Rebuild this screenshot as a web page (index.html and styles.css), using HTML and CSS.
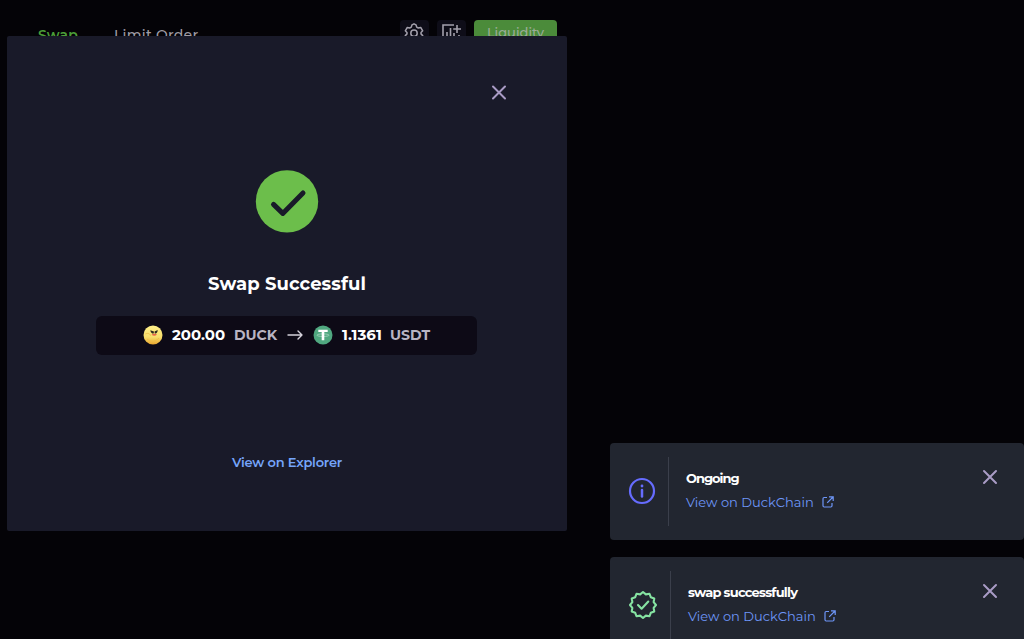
FILE: index.html
```html
<!DOCTYPE html>
<html lang="en">
<head>
<meta charset="utf-8">
<title>Swap</title>
<link rel="stylesheet" href="styles.css">
</head>
<body>
<header class="toolbar">
  <nav class="tabs"><span class="tab tab-active">Swap</span><span class="tab tab-limit">Limit Order</span></nav>
  <div class="actions">
    <span class="tool"><svg width="20" height="20" viewBox="0 0 20 20" fill="none" stroke="currentColor" stroke-width="1.5" stroke-linejoin="round"><path d="M8 1.800l2-1 2 1 .7 2.300 1.600.9 2.400-.6 2 3.400L17 9.500v1.400l1.700 1.700-2 3.400-2.400-.6-1.600.9-.7 2.300H8l-.7-2.300-1.600-.9-2.400.6-2-3.400L3 10.900V9.500L1.300 7.800l2-3.400 2.400.6 1.600-.9z"/><circle cx="10" cy="10.200" r="3.200"/></svg></span>
    <span class="tool"><svg width="20" height="20" viewBox="0 0 20 20" fill="none" stroke="currentColor" stroke-width="1.6"><path d="M13 2H2v16h16v-6M6 16V9M9.500 16V5M13 16v-6M16 2v8M12.200 6H20"/></svg></span>
    <span class="liquidity">Liquidity</span>
  </div>
</header>

<main class="modal">
  <svg class="modal-close" width="16" height="16" viewBox="0 0 16 16"><path d="M2 1.500l12 12M14 1.500l-12 12"/></svg>
  <svg class="success" width="64" height="64" viewBox="0 0 64 64"><circle cx="32" cy="32.400" r="31.200" fill="#6cbe4b"/><path d="M18.500 35.400l9.300 9L48 24" fill="none" stroke="#191a29" stroke-width="5" stroke-linecap="round" stroke-linejoin="round"/></svg>
  <h1 class="title">Swap Successful</h1>
  <div class="summary">
    <svg class="coin" width="20" height="20" viewBox="0 0 20 20">
      <defs><linearGradient id="gold" x1="0" y1="0" x2="0" y2="1"><stop offset="0" stop-color="#fff08a"/><stop offset=".6" stop-color="#f8df6c"/><stop offset="1" stop-color="#e9a52e"/></linearGradient></defs>
      <circle cx="10" cy="10" r="9.500" fill="url(#gold)"/><path d="M2.300 9c3-1.500 5 0 5.500 2M4 14c4 3.500 9 2.500 12-1" fill="none" stroke="#eebc48" stroke-width=".8"/>
      <path d="M7.300 5.300l3.700 1.300-.3 2c-1.700.2-3-.8-3.400-3.300zM14.700 5l-3.200 1.600.3 2c1.700 0 2.800-1 2.900-3.600z" fill="#302b20"/><path d="M8.500 9.700q2.500-1.800 5.500-.2-2.500 2.300-5.500.2z" fill="#e8654b"/>
    </svg>
    <strong class="amount amount-in">200.00</strong><span class="symbol symbol-in">DUCK</span>
    <svg class="arrow" width="16" height="12" viewBox="0 0 16 12" fill="none" stroke="#d5d2dc" stroke-width="1.400" stroke-linecap="round" stroke-linejoin="round"><path d="M1 6h14M11 2l4 4-4 4"/></svg>
    <svg class="coin tether" width="20" height="20" viewBox="0 0 20 20"><circle cx="10" cy="10" r="9.500" fill="#50a880"/><ellipse cx="10" cy="10.200" rx="6" ry="1.300" fill="none" stroke="#b5dcca" stroke-width=".7"/><path d="M5.300 4.700h9.400V7h-3.400v8.300H8.700V7H5.300z" fill="#fff"/></svg>
    <strong class="amount amount-out">1.1361</strong><span class="symbol symbol-out">USDT</span>
  </div>
  <a class="explorer">View on Explorer</a>
</main>

<aside class="toasts">
  <section class="toast">
    <div class="toast-icon"><svg width="28" height="28" viewBox="0 0 28 28" fill="none" stroke="#666cff" stroke-width="2.200"><circle cx="14" cy="14" r="12"/><path d="M14 13v6.500" stroke-width="2.500" stroke-linecap="round"/><circle cx="14" cy="9" r="1.400" fill="#666cff" stroke="none"/></svg></div>
    <div class="toast-copy"><strong class="toast-title ongoing">Ongoing</strong><a class="chain"><span>View on DuckChain</span><svg width="12" height="12" viewBox="0 0 12 12"><path d="M5 1.500H2.200Q1 1.500 1 2.700v7.100Q1 11 2.200 11h6.600Q10 11 10 9.800V7M7 .8h4.200V5M11 1L5.200 6.800"/></svg></a></div>
    <svg class="toast-close" width="16" height="16" viewBox="0 0 16 16"><path d="M2 2l12 12M14 2L2 14"/></svg>
  </section>
  <section class="toast toast-done">
    <div class="toast-icon"><svg width="30" height="30" viewBox="-15 -15 30 30" fill="none" stroke="#86e3a2" stroke-width="2.100" stroke-linecap="round" stroke-linejoin="round"><path d="M0-13 2.850-10.630 6.500-11.260 7.780-7.780 11.260-6.500 10.630-2.850 13 0 10.630 2.850 11.260 6.500 7.780 7.780 6.500 11.260 2.850 10.630 0 13-2.850 10.630-6.500 11.260-7.780 7.780-11.260 6.500-10.630 2.850-13 0-10.630-2.850-11.260-6.500-7.780-7.780-6.500-11.260-2.850-10.630z"/><path d="M-5 0l3.600 3.700L5.300-3.500"/></svg></div>
    <div class="toast-copy"><strong class="toast-title">swap successfully</strong><a class="chain"><span>View on DuckChain</span><svg width="12" height="12" viewBox="0 0 12 12"><path d="M5 1.500H2.200Q1 1.500 1 2.700v7.100Q1 11 2.200 11h6.600Q10 11 10 9.800V7M7 .8h4.200V5M11 1L5.200 6.800"/></svg></a></div>
    <svg class="toast-close" width="16" height="16" viewBox="0 0 16 16"><path d="M2 2l12 12M14 2L2 14"/></svg>
  </section>
</aside>
</body>
</html>
```
FILE: styles.css
```css
* { box-sizing: border-box; }
body { margin: 0; height: 639px; overflow: hidden; background: #040307; font-family: Montserrat, Inter, sans-serif; position: relative; }
.toolbar { width: 557px; height: 44px; padding: 20px 0 0 38px; display: flex; justify-content: space-between; }
.tabs { display: flex; padding-top: 5px; font-size: 14px; line-height: 20px; color: #9f9ca5; }
.tab { white-space: nowrap; }
.tab-active { width: 76px; color: #4b9d38; font-weight: 600; letter-spacing: .2px; }
.tab-limit { font-weight: 500; letter-spacing: .25px; }
.actions { display: flex; }
.tool { width: 29px; height: 28px; margin-right: 8px; border-radius: 4px; background: #0e0d18; color: #a3a0ac; display: flex; justify-content: center; padding: 3px 1px 0 0; }
.liquidity { width: 83px; height: 28px; border-radius: 4px; background: #4b8b3a; color: #9bad98; font-size: 13px; font-weight: 500; line-height: 25px; text-align: center; }
.modal { position: absolute; left: 7px; top: 36px; width: 560px; height: 495px; background: #191a29; border-radius: 2px; display: flex; flex-direction: column; align-items: center; padding-top: 49px; }
.modal-close { align-self: flex-end; margin-right: 60px; }
.modal-close, .toast-close { fill: none; stroke: #a99bc5; stroke-width: 2; stroke-linecap: round; flex: none; }
.success { margin-top: 68px; }
.title { margin: 39px 0 0; color: #fff; font-size: 18px; line-height: 24px; font-weight: 700; letter-spacing: .1px; white-space: nowrap; }
.summary { width: 381px; height: 39px; margin: 20px 1px 0 0; background: #0d0a16; border-radius: 6px; display: flex; align-items: center; padding: 0 0 1px 47px; font-size: 14px; line-height: 20px; }
.coin, .arrow { flex: none; }
.amount { color: #fff; font-size: 15px; font-weight: 700; }
.amount-in { margin-left: 9px; width: 62px; }
.symbol { color: #b9b4c3; font-weight: 700; }
.symbol-in { width: 53px; }
.tether { margin-left: 10px; }
.amount-out { margin-left: 9px; width: 48px; }
.explorer { margin-top: 97px; color: #75a5fb; font-size: 13px; line-height: 20px; font-weight: 600; letter-spacing: -.2px; white-space: nowrap; }
.toasts { position: absolute; left: 610px; top: 442.500px; width: 414px; display: flex; flex-direction: column; gap: 17px; }
.toast { height: 97px; background: #222630; border-radius: 4px; display: flex; padding: 14px 26px 14px 18px; }
.toast-icon { width: 41px; border-right: 1px solid #3b3f4b; display: flex; align-items: center; }
.toast-done .toast-icon { width: 43px; }
.toast-copy { flex: 1; padding: 11px 0 0 17px; display: flex; flex-direction: column; }
.toast-title { color: #fff; font-size: 13px; line-height: 20px; font-weight: 700; letter-spacing: -.75px; white-space: nowrap; }
.ongoing { letter-spacing: -1px; }
.chain { display: flex; align-items: center; gap: 8px; margin-top: 4px; font-size: 13px; line-height: 20px; color: #6e96f8; white-space: nowrap; }
.chain svg { fill: none; stroke: currentColor; stroke-width: 1.200; }
.toast-close { margin-top: 12px; }
```
